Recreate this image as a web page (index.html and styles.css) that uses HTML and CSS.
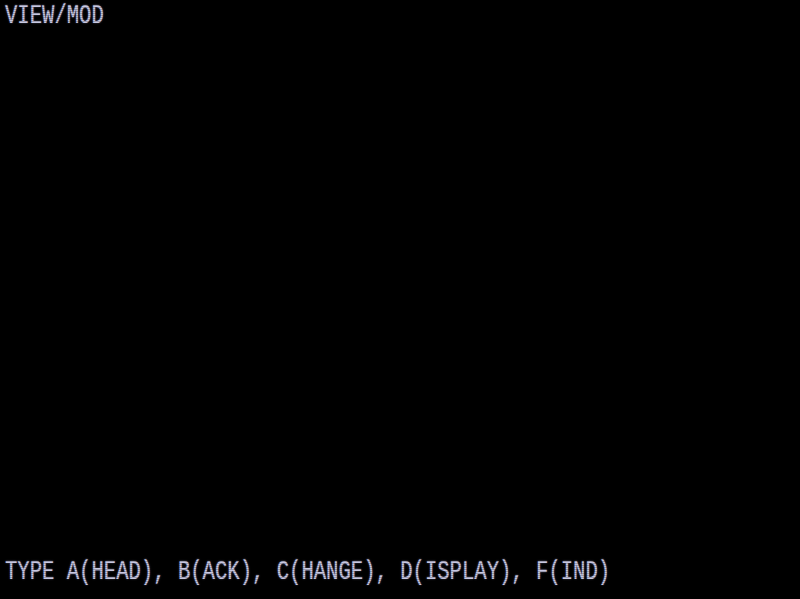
FILE: index.html
```html
<!DOCTYPE html>
<html>
<head>
<meta charset="utf-8">
<link rel="stylesheet" href="styles.css">
</head>
<body>
<div class="screen">
  <div class="line top"><span class="txt">VIEW/MOD</span></div>
  <div class="line bottom"><span class="txt">TYPE A(HEAD), B(ACK), C(HANGE), D(ISPLAY), F(IND)</span></div>
</div>
</body>
</html>
```

FILE: styles.css
```css
html, body {
  margin: 0;
  padding: 0;
  background: #000;
}
.screen {
  position: relative;
  width: 800px;
  height: 599px;
  display: flex;
  flex-direction: column;
  justify-content: space-between;
  overflow: hidden;
  background: #000;
}
.screen::after {
  content: "";
  position: absolute;
  inset: 0;
  background: repeating-linear-gradient(to bottom, rgba(0, 0, 0, 0) 0, rgba(0, 0, 0, 0) 1px, rgba(0, 0, 0, 0.22) 1px, rgba(0, 0, 0, 0.22) 2px);
  pointer-events: none;
}
.line {
  height: 28px;
  padding-left: 5px;
  white-space: nowrap;
}
.top {
  padding-top: 2px;
}
.bottom {
  padding-bottom: 13px;
}
.txt {
  display: inline-block;
  font-family: "Liberation Mono", "DejaVu Sans Mono", monospace;
  font-size: 28px;
  line-height: 28px;
  color: #c8c8e2;
  transform: scaleX(0.735);
  transform-origin: left top;
  text-shadow: 0 0 2px rgba(180, 180, 230, 0.6);
}
```
